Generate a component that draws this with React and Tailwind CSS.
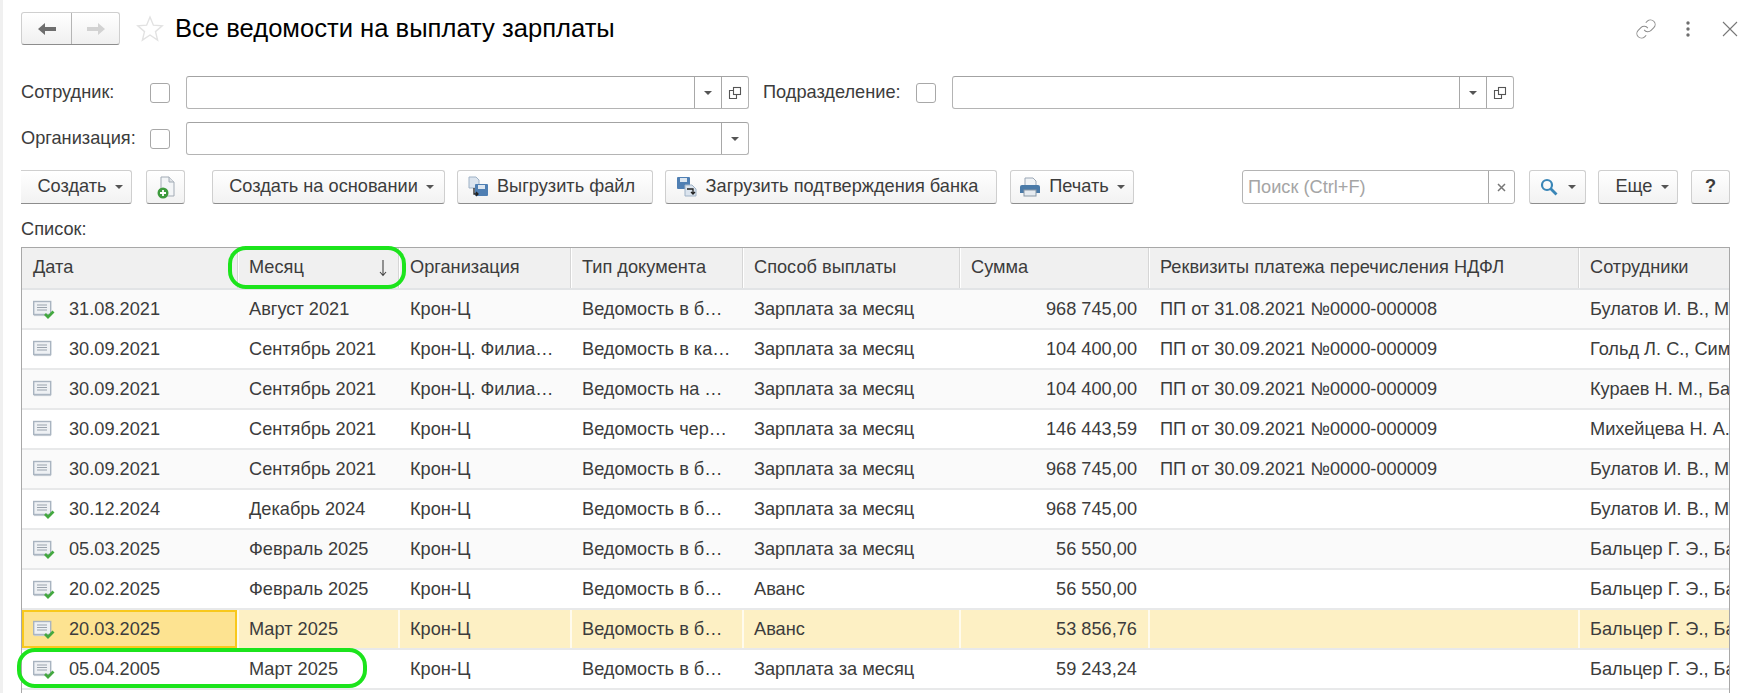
import React from "react";

const font = { fontFamily: '"Liberation Sans", Arial, sans-serif' };

const columns = [
  { title: "Дата", width: "w-[215px]" },
  { title: "Месяц", width: "w-[161px]" },
  { title: "Организация", width: "w-[172px]" },
  { title: "Тип документа", width: "w-[172px]" },
  { title: "Способ выплаты", width: "w-[217px]" },
  { title: "Сумма", width: "w-[189px]" },
  { title: "Реквизиты платежа перечисления НДФЛ", width: "w-[430px]" },
  { title: "Сотрудники", width: "flex-1" },
];

const rows = [
  { check: true, date: "31.08.2021", month: "Август 2021", org: "Крон-Ц", type: "Ведомость в б…", pay: "Зарплата за месяц", sum: "968 745,00", req: "ПП от 31.08.2021 №0000-000008", staff: "Булатов И. В., Михейцева Н. А." },
  { check: false, date: "30.09.2021", month: "Сентябрь 2021", org: "Крон-Ц. Филиа…", type: "Ведомость в ка…", pay: "Зарплата за месяц", sum: "104 400,00", req: "ПП от 30.09.2021 №0000-000009", staff: "Гольд Л. С., Симонов А. А." },
  { check: false, date: "30.09.2021", month: "Сентябрь 2021", org: "Крон-Ц. Филиа…", type: "Ведомость на …", pay: "Зарплата за месяц", sum: "104 400,00", req: "ПП от 30.09.2021 №0000-000009", staff: "Кураев Н. М., Бальцер Г. Э." },
  { check: false, date: "30.09.2021", month: "Сентябрь 2021", org: "Крон-Ц", type: "Ведомость чер…", pay: "Зарплата за месяц", sum: "146 443,59", req: "ПП от 30.09.2021 №0000-000009", staff: "Михейцева Н. А., Булатов И. В." },
  { check: false, date: "30.09.2021", month: "Сентябрь 2021", org: "Крон-Ц", type: "Ведомость в б…", pay: "Зарплата за месяц", sum: "968 745,00", req: "ПП от 30.09.2021 №0000-000009", staff: "Булатов И. В., Михейцева Н. А." },
  { check: true, date: "30.12.2024", month: "Декабрь 2024", org: "Крон-Ц", type: "Ведомость в б…", pay: "Зарплата за месяц", sum: "968 745,00", req: "", staff: "Булатов И. В., Михейцева Н. А." },
  { check: true, date: "05.03.2025", month: "Февраль 2025", org: "Крон-Ц", type: "Ведомость в б…", pay: "Зарплата за месяц", sum: "56 550,00", req: "", staff: "Бальцер Г. Э., Бадаев А. П." },
  { check: true, date: "20.02.2025", month: "Февраль 2025", org: "Крон-Ц", type: "Ведомость в б…", pay: "Аванс", sum: "56 550,00", req: "", staff: "Бальцер Г. Э., Бадаев А. П." },
  { check: true, date: "20.03.2025", month: "Март 2025", org: "Крон-Ц", type: "Ведомость в б…", pay: "Аванс", sum: "53 856,76", req: "", staff: "Бальцер Г. Э., Бадаев А. П.", selected: true },
  { check: true, date: "05.04.2005", month: "Март 2025", org: "Крон-Ц", type: "Ведомость в б…", pay: "Зарплата за месяц", sum: "59 243,24", req: "", staff: "Бальцер Г. Э., Бадаев А. П." },
];

const Caret = () => (
  <span className="inline-block w-0 h-0 border-x-[4px] border-x-transparent border-t-[4px] border-t-[#555]" />
);

const DocIcon = ({ check }) => (
  <svg width="22" height="20" viewBox="0 0 22 20" className="shrink-0">
    <rect x="0.7" y="1.500" width="17" height="13" fill="#eef1f4" stroke="#a9b4c0" strokeWidth="1.400" />
    <path d="M1 15.500h17" stroke="#c3cad2" strokeWidth="1.200" />
    <path d="M4 5h10M4 7.500h10M4 10h10" stroke="#9aa3ad" strokeWidth="1" />
    {check && <path d="M12 14l3 3 5.500-5.500" fill="none" stroke="#43a83f" strokeWidth="2.800" />}
  </svg>
);

const Button = ({ width, className = "", children }) => (
  <div
    className={`${width} ${className} h-[34px] shrink-0 flex items-center justify-center rounded-[3px] border border-[#cfcfcf] border-b-[#8d8d8d] bg-gradient-to-b from-white to-[#f2f2f2] text-[18.200px] text-[#3c3c3c]`}
  >
    {children}
  </div>
);

const Lookup = ({ width, open }) => (
  <div className={`${width} h-[33px] flex rounded-[3px] border border-[#b4b4b4] border-t-[#a3a3a3] bg-white`}>
    <div className="flex-1" />
    <div className="w-[27px] flex items-center justify-center border-l border-[#a8a8a8]">
      <Caret />
    </div>
    {open && (
      <div className="w-[27px] flex items-center justify-center border-l border-[#a8a8a8]">
        <svg width="14" height="14" viewBox="0 0 14 14" fill="none" stroke="#555" strokeWidth="1.100">
          <rect x="5.500" y="1.500" width="7" height="7" />
          <path d="M5.500 4.500h-4v8h7v-4" />
        </svg>
      </div>
    )}
  </div>
);

const Checkbox = () => <div className="w-[20px] h-[20px] shrink-0 rounded-[3px] border border-[#a8a8a8] bg-white" />;

export default function App() {
  return (
    <div
      style={font}
      className="relative h-[693px] overflow-hidden bg-white border-l-[3px] border-[#f0f0f0] pl-[18px] pr-[29px] pt-[12px] text-[18.200px] text-[#3c3c3c]"
    >
      {/* Заголовок */}
      <div className="flex items-center h-[33px] -mr-[8px]">
        <div className="w-[99px] h-[33px] flex rounded-[3px] border border-[#cfcfcf] border-b-[#8d8d8d] bg-gradient-to-b from-white to-[#f0f0f0]">
          <div className="w-[50px] flex items-center justify-center border-r border-[#b5b5b5]">
            <svg width="20" height="14" viewBox="0 0 20 14">
              <path d="M8 1L1 7l7 6V9h11V5H8z" fill="#6e6e6e" />
            </svg>
          </div>
          <div className="flex-1 flex items-center justify-center">
            <svg width="20" height="14" viewBox="0 0 20 14">
              <path d="M12 1l7 6-7 6V9H1V5h11z" fill="#d2d2d2" />
            </svg>
          </div>
        </div>
        <svg width="28" height="27" viewBox="0 0 28 27" fill="none" stroke="#e2e2e2" strokeWidth="1.400" className="ml-[16px]">
          <path d="M14 2l3.400 8.200 8.800.7-6.700 5.700 2.100 8.600L14 20l-7.600 5.200 2.100-8.600-6.700-5.700 8.800-.7z" />
        </svg>
        <h1 className="ml-[11px] text-[25.600px] leading-none text-black">Все ведомости на выплату зарплаты</h1>
        <div className="ml-auto flex items-center">
          <svg width="22" height="22" viewBox="0 0 24 24" fill="none" stroke="#8c8c8c" strokeWidth="1.100">
            <path d="M10 13a5 5 0 0 0 7.540.54l3-3a5 5 0 0 0-7.070-7.070l-1.720 1.710" />
            <path d="M14 11a5 5 0 0 0-7.540-.54l-3 3a5 5 0 0 0 7.070 7.070l1.710-1.710" />
          </svg>
          <svg width="6" height="18" viewBox="0 0 6 18" fill="#6e6e6e" className="ml-[28px]">
            <circle cx="3" cy="3" r="1.700" />
            <circle cx="3" cy="9" r="1.700" />
            <circle cx="3" cy="15" r="1.700" />
          </svg>
          <svg width="16" height="16" viewBox="0 0 16 16" stroke="#777" strokeWidth="1.100" className="ml-[31px]">
            <path d="M1 1l14 14M15 1L1 15" />
          </svg>
        </div>
      </div>

      {/* Отбор */}
      <div className="flex items-center mt-[31px]">
        <span className="w-[129px]">Сотрудник:</span>
        <Checkbox />
        <div className="ml-[16px]">
          <Lookup width="w-[563px]" open />
        </div>
        <span className="ml-[14px] w-[153px]">Подразделение:</span>
        <Checkbox />
        <div className="ml-[16px]">
          <Lookup width="w-[562px]" open />
        </div>
      </div>
      <div className="flex items-center mt-[13px]">
        <span className="w-[129px]">Организация:</span>
        <Checkbox />
        <div className="ml-[16px]">
          <Lookup width="w-[563px]" />
        </div>
      </div>

      {/* Командная панель */}
      <div className="flex items-center mt-[15px]">
        <Button width="w-[111px]" className="rounded-l-none border-l-0 gap-[8px] pl-[8px]">
          Создать <Caret />
        </Button>
        <Button width="w-[39px]" className="ml-[14px]">
          <svg width="20" height="24" viewBox="0 0 20 24">
            <path d="M5 2h8l5 5v14H5z" fill="#f3f5f7" stroke="#a2abb5" />
            <path d="M13 2v5h5" fill="#dfe3e7" stroke="#a2abb5" />
            <circle cx="7" cy="18" r="5.500" fill="#3d9a3d" />
            <path d="M7 15v6M4 18h6" stroke="#fff" strokeWidth="1.800" />
          </svg>
        </Button>
        <Button width="w-[233px]" className="ml-[27px] gap-[8px] pl-[6px]">
          Создать на основании <Caret />
        </Button>
        <Button width="w-[196px]" className="ml-[12px] gap-[8px] pr-[8px]">
          <svg width="22" height="22" viewBox="0 0 22 22">
            <path d="M2 1h7l3 3v8H2z" fill="#dbe4ee" stroke="#9fb2c6" />
            <rect x="8" y="8" width="13" height="12" rx="1" fill="#4f7fb3" />
            <rect x="11" y="9" width="7" height="4" fill="#dce6f0" />
            <path d="M7 12v6h4M9 16l2 2-2 2" fill="none" stroke="#222" strokeWidth="1.300" />
          </svg>
          Выгрузить файл
        </Button>
        <Button width="w-[332px]" className="ml-[12px] gap-[8px] pr-[8px]">
          <svg width="22" height="22" viewBox="0 0 22 22">
            <rect x="1" y="1" width="13" height="12" rx="1" fill="#4f7fb3" />
            <rect x="4" y="2" width="7" height="4" fill="#dce6f0" />
            <path d="M9 9h7l4 4v7H9z" fill="#dbe4ee" stroke="#9fb2c6" />
            <path d="M11 13h6v5M15 16l2 2 2-2" fill="none" stroke="#222" strokeWidth="1.300" />
          </svg>
          Загрузить подтверждения банка
        </Button>
        <Button width="w-[124px]" className="ml-[13px] gap-[8px]">
          <svg width="22" height="20" viewBox="0 0 22 20">
            <path d="M6 1h8l3 3v5H6z" fill="#f0f3f6" stroke="#9aa7b5" />
            <path d="M3 8h16a2 2 0 0 1 2 2v6H1v-6a2 2 0 0 1 2-2z" fill="#4a7aa8" />
            <rect x="5" y="13" width="12" height="6" fill="#e6ebf0" stroke="#8a98a6" />
          </svg>
          Печать <Caret />
        </Button>
        <div className="ml-[108px] w-[274px] h-[34px] flex rounded-[3px] border border-[#b4b4b4] bg-white">
          <span className="flex-1 pl-[5px] leading-[32px] text-[#a5a5a5]">Поиск (Ctrl+F)</span>
          <div className="w-[26px] flex items-center justify-center border-l border-[#a8a8a8]">
            <svg width="9" height="9" viewBox="0 0 9 9" stroke="#777" strokeWidth="1.500">
              <path d="M1 1l7 7M8 1L1 8" />
            </svg>
          </div>
        </div>
        <Button width="w-[57px]" className="ml-[14px] gap-[10px]">
          <svg width="18" height="18" viewBox="0 0 18 18" fill="none" stroke="#3a86b7" strokeWidth="2.200">
            <circle cx="7" cy="7" r="5" />
            <path d="M10.500 10.500l6 6" strokeWidth="2.800" />
          </svg>
          <Caret />
        </Button>
        <Button width="w-[80px]" className="ml-[12px] gap-[8px] pl-[8px]">
          Еще <Caret />
        </Button>
        <Button width="w-[39px]" className="ml-[13px] font-bold">
          ?
        </Button>
      </div>

      <div className="mt-[16px] h-[18px] leading-[18px]">Список:</div>

      {/* Таблица */}
      <div className="mt-[9px] h-[460px] border-x border-t border-[#a8a8a8]">
        <div className="flex h-[42px] bg-[#f0f0f0] border-b-2 border-[#e2e4e6]">
          {columns.map((col, i) => (
            <div
              key={col.title}
              className={`${col.width} shrink-0 relative flex items-center px-[11px] ${
                i > 0 ? "border-l border-[#d6d6d6] shadow-[inset_1px_0_0_#fff]" : ""
              }`}
            >
              {col.title}
              {col.title === "Месяц" && (
                <svg width="10" height="18" viewBox="0 0 10 18" fill="none" stroke="#444" strokeWidth="1.100" className="ml-auto -mr-[1px]">
                  <path d="M5 1v15M2 13l3 3.500 3-3.500" />
                </svg>
              )}
            </div>
          ))}
        </div>
        {rows.map((row, r) => {
          const bg = row.selected ? "bg-[#fdf0c4]" : r % 2 === 0 && r < 8 ? "bg-[#fafafa]" : "bg-white";
          const cells = [row.month, row.org, row.type, row.pay, row.sum, row.req, row.staff];
          return (
            <div key={r} className={`flex h-[40px] border-b-2 border-[#e8e9ea] ${bg}`}>
              <div
                className={`${columns[0].width} shrink-0 flex items-center gap-[14px] pt-[1px] ${
                  row.selected ? "bg-[#fde391] border-2 border-[#f8c81c] pl-[9px]" : "pl-[11px]"
                }`}
              >
                <DocIcon check={row.check} />
                {row.date}
              </div>
              {cells.map((cell, c) => (
                <div
                  key={c}
                  className={`${columns[c + 1].width} shrink-0 flex items-center border-l-2 pt-[1px] pl-[10px] pr-[11px] whitespace-nowrap overflow-hidden ${
                    columns[c + 1].title === "Сумма" ? "justify-end" : ""
                  } ${row.selected ? "border-white/70" : "border-transparent"}`}
                >
                  {cell}
                </div>
              ))}
            </div>
          );
        })}
      </div>

      {/* Зелёные пометки поверх таблицы */}
      <div className="absolute left-[225px] top-[246px] w-[178px] h-[43px] rounded-[18px] border-[4px] border-[#1ce41c]" />
      <div className="absolute left-[14px] top-[648px] w-[350px] h-[40px] rounded-[18px] border-[4px] border-[#1ce41c]" />
    </div>
  );
}
